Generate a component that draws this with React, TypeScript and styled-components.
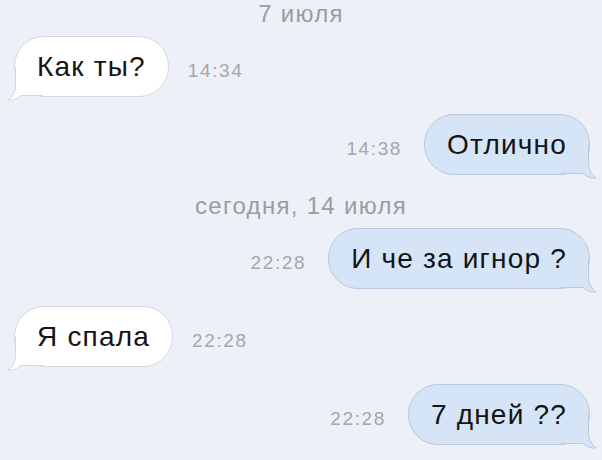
import React from "react";
import styled, { createGlobalStyle } from "styled-components";

const Global = createGlobalStyle`
  html, body { margin: 0; padding: 0; background: #edf1f7; }
  body { font-family: "Liberation Sans", Arial, sans-serif; }
`;

const Screen = styled.div`
  width: 602px;
  height: 460px;
  overflow: hidden;
  background: #edf1f7;
  display: flex;
  flex-direction: column;
  gap: 17px;
  box-sizing: border-box;
`;

const DateLabel = styled.div`
  text-align: center;
  font-size: 24px;
  line-height: 28px;
  letter-spacing: 1.3px;
  color: #9a9ca1;
  margin-bottom: -9px;
`;

const Row = styled.div<{ $out?: boolean }>`
  display: flex;
  align-items: center;
  justify-content: ${(p) => (p.$out ? "flex-end" : "flex-start")};
  gap: ${(p) => (p.$out ? "22px" : "19px")};
  padding: 0 12px 0 14px;
`;

const Bubble = styled.div<{ $out?: boolean }>`
  position: relative;
  height: 61px;
  box-sizing: border-box;
  display: flex;
  align-items: center;
  padding: 0 22px 0 22px;
  border-radius: 30px;
  background: ${(p) => (p.$out ? "#d6e4f7" : "#ffffff")};
  border: 1px solid ${(p) => (p.$out ? "#b9c8dc" : "#d3d8e0")};
`;

const BubbleText = styled.span`
  position: relative;
  z-index: 1;
  font-size: 28px;
  letter-spacing: 1.2px;
  color: #141414;
  white-space: nowrap;
`;

const Tail = styled.svg<{ $out?: boolean }>`
  position: absolute;
  bottom: -5px;
  ${(p) => (p.$out ? "right: -8px; transform: scaleX(-1);" : "left: -8px;")}
  width: 36px;
  height: 34px;
  overflow: visible;
  z-index: 0;
`;

const Time = styled.span`
  font-size: 19px;
  letter-spacing: 1.6px;
  color: #a4a7ac;
  padding-top: 9px;
`;

type Msg = { text: string; time: string; out?: boolean };

const BubbleTail = ({ out }: { out?: boolean }) => {
  const fill = out ? "#d6e4f7" : "#ffffff";
  const stroke = out ? "#b9c8dc" : "#d3d8e0";
  return (
    <Tail $out={out} viewBox="0 0 36 34">
      <path
        d="M9 0 L9 18 C9 25 5.5 30 1.5 33 C6.5 33 11 31 14 28.5 L36 28.5 L36 0 Z"
        fill={fill}
      />
      <path
        d="M8.5 0 L8.5 18 C8.5 25 5 30 1 33 C6 33.5 11 31.5 14 28.5 L36 28.5"
        fill="none"
        stroke={stroke}
        strokeWidth={1}
      />
    </Tail>
  );
};

const Message = ({ text, time, out }: Msg) => (
  <Row $out={out}>
    {out && <Time>{time}</Time>}
    <Bubble $out={out}>
      <BubbleTail out={out} />
      <BubbleText>{text}</BubbleText>
    </Bubble>
    {!out && <Time>{time}</Time>}
  </Row>
);

export default function App() {
  return (
    <>
      <Global />
      <Screen>
        <DateLabel>7 июля</DateLabel>
        <Message text="Как ты?" time="14:34" />
        <Message text="Отлично" time="14:38" out />
        <DateLabel>сегодня, 14 июля</DateLabel>
        <Message text="И че за игнор ?" time="22:28" out />
        <Message text="Я спала" time="22:28" />
        <Message text="7 дней ??" time="22:28" out />
      </Screen>
    </>
  );
}
